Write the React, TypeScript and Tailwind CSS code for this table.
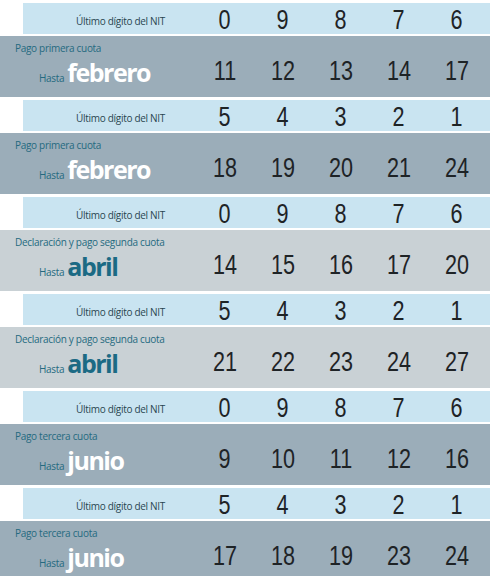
import React from "react";

type Block = {
  digits: number[];
  label: string;
  month: string;
  days: number[];
  tone: "dark" | "light";
};

const blocks: Block[] = [
  { digits: [0, 9, 8, 7, 6], label: "Pago primera cuota", month: "febrero", days: [11, 12, 13, 14, 17], tone: "dark" },
  { digits: [5, 4, 3, 2, 1], label: "Pago primera cuota", month: "febrero", days: [18, 19, 20, 21, 24], tone: "dark" },
  { digits: [0, 9, 8, 7, 6], label: "Declaración y pago segunda cuota", month: "abril", days: [14, 15, 16, 17, 20], tone: "light" },
  { digits: [5, 4, 3, 2, 1], label: "Declaración y pago segunda cuota", month: "abril", days: [21, 22, 23, 24, 27], tone: "light" },
  { digits: [0, 9, 8, 7, 6], label: "Pago tercera cuota", month: "junio", days: [9, 10, 11, 12, 16], tone: "dark" },
  { digits: [5, 4, 3, 2, 1], label: "Pago tercera cuota", month: "junio", days: [17, 18, 19, 23, 24], tone: "dark" },
];

function Numbers({ values }: { values: number[] }) {
  return (
    <div className="grid grid-cols-5 w-[290px] text-[27px] leading-none text-[#1e2326] font-['Liberation_Sans',sans-serif]">
      {values.map((v, i) => (
        <div key={i} className="text-center">
          <span className="inline-block scale-x-[0.8]">{v}</span>
        </div>
      ))}
    </div>
  );
}

export default function App() {
  return (
    <div className="w-[490px] h-[576px] overflow-hidden bg-white font-['Open_Sans',sans-serif]">
      {blocks.map((b, i) => (
        <div key={i} className="pt-[3px]">
          {/* digit row */}
          <div className="ml-[23px] h-[31px] bg-[#c9e4f1] flex items-end">
            <div className="w-[173px] pr-[31px] text-right text-[10px] leading-none text-[#2a4650] tracking-[-0.3px] mb-[8px]">
              Último dígito del NIT
            </div>
            <Numbers values={b.digits} />
          </div>
          {/* dates row */}
          <div
            className={
              "mt-[2px] h-[61px] flex items-end pb-[12px] " +
              (b.tone === "dark" ? "bg-[#9badb9]" : "bg-[#c9d1d5]")
            }
          >
            <div className="w-[196px] self-start flex flex-col pt-[7px]">
              <div className="pl-[15px] text-[10px] leading-[10px] h-[10px] text-[#256a80] tracking-[-0.3px]">
                {b.label}
              </div>
              <div className="mt-[7px] pl-[39px] flex items-baseline gap-[3px] leading-[25px] h-[25px]">
                <span className="text-[10px] text-[#256a80] tracking-[-0.3px]">Hasta</span>
                <span
                  className={
                    "text-[25px] font-bold tracking-[-1.5px] " +
                    (b.tone === "dark" ? "text-white" : "text-[#1b6a84]")
                  }
                >
                  {b.month}
                </span>
              </div>
            </div>
            <Numbers values={b.days} />
          </div>
        </div>
      ))}
    </div>
  );
}
